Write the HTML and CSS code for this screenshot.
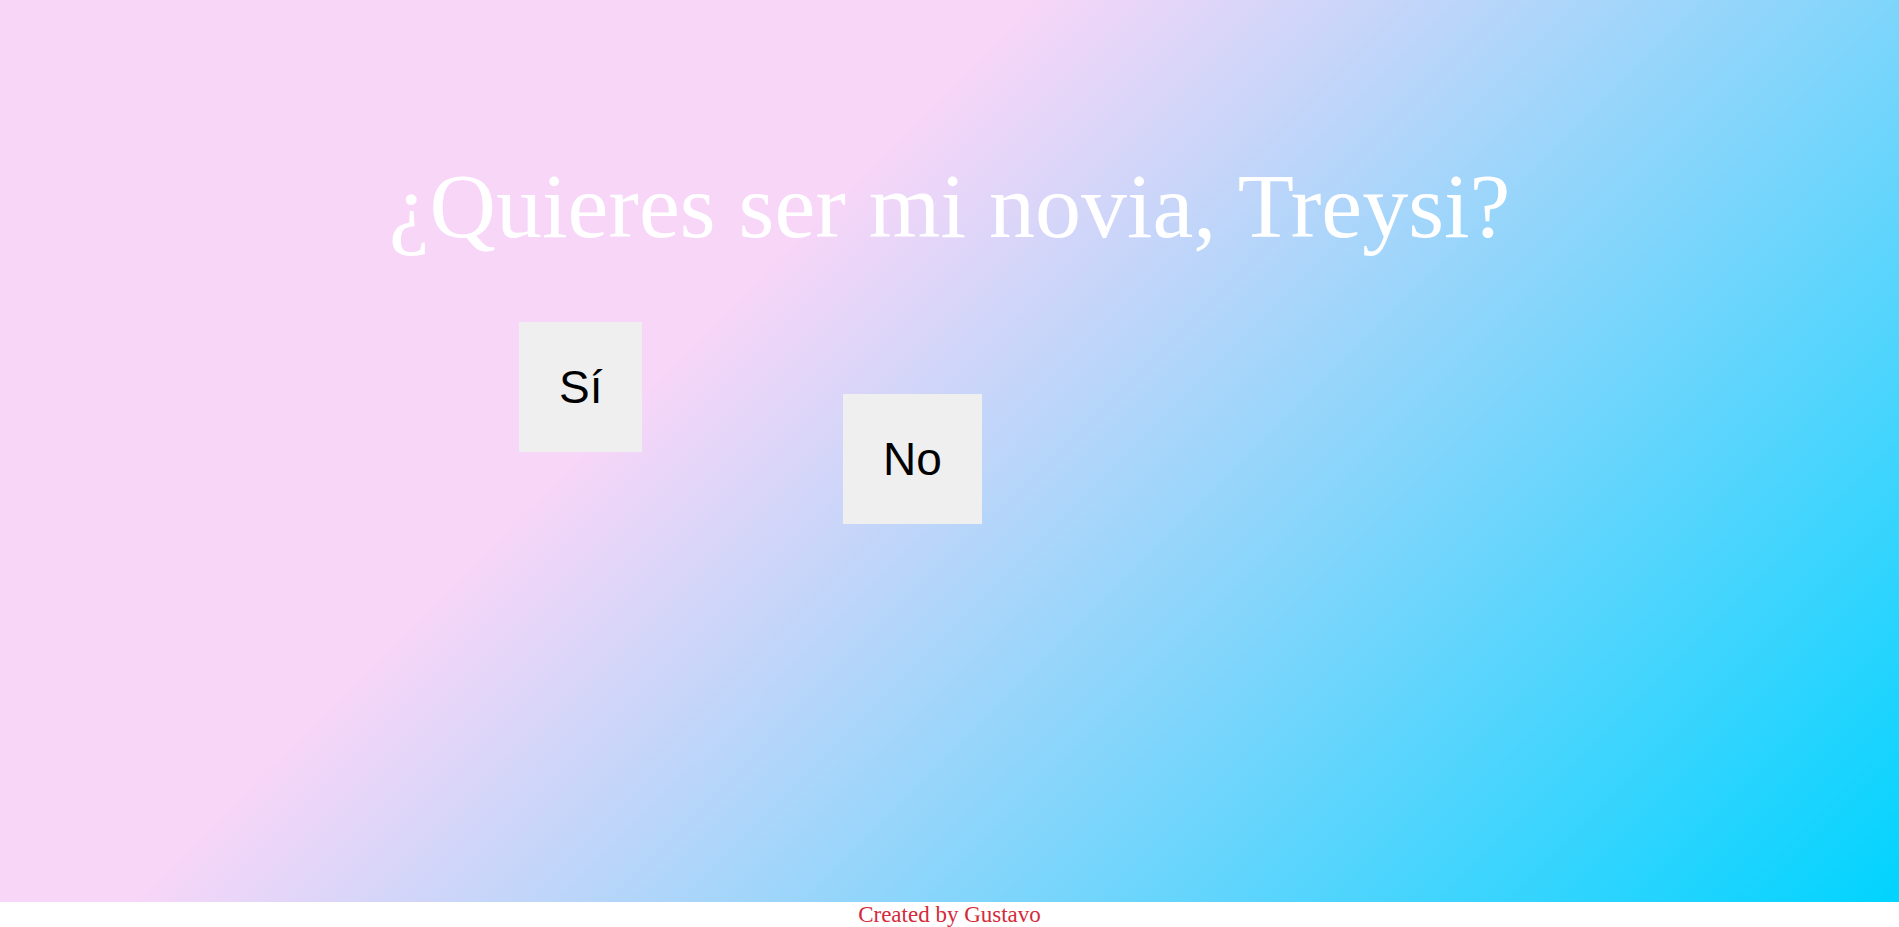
FILE: index.html
```html
<!DOCTYPE html>
<html lang="es">
<head>
<meta charset="utf-8">
<title>¿Quieres ser mi novia?</title>
<link rel="stylesheet" href="styles.css">
</head>
<body>
  <main class="stage">
    <h1 class="question">¿Quieres ser mi novia, Treysi?</h1>
    <div class="choices">
      <button class="choice choice-yes">Sí</button>
      <button class="choice choice-no">No</button>
    </div>
  </main>
  <footer class="credits">Created by Gustavo</footer>
</body>
</html>
```

FILE: styles.css
```css
html, body {
  margin: 0;
  padding: 0;
  height: 100%;
  overflow: hidden;
}

body {
  display: flex;
  flex-direction: column;
  background: #ffffff;
  font-family: "Liberation Serif", "Times New Roman", serif;
}

.stage {
  position: relative;
  flex: 1;
  display: flex;
  flex-direction: column;
  padding-top: 153px;
  box-sizing: border-box;
  background: linear-gradient(135deg, #f7d6f8 37%, #00d4ff 100%);
}

.question {
  margin: 0;
  text-align: center;
  color: #ffffff;
  font-family: "Liberation Serif", "Times New Roman", serif;
  font-weight: normal;
  font-size: 92px;
  line-height: normal;
}

.choices {
  display: flex;
  padding-top: 63px;
  padding-left: 519px;
}

.choice {
  border: none;
  border-radius: 0;
  background: #efefef;
  color: #000000;
  font-family: "Liberation Sans", Arial, sans-serif;
  font-size: 46px;
  line-height: 50px;
  padding: 40px;
  margin: 0;
  cursor: pointer;
}

.choice-no {
  position: absolute;
  left: 843px;
  top: 394px;
}

.credits {
  height: 25px;
  line-height: 25px;
  text-align: center;
  color: #d42a3a;
  font-family: "Liberation Serif", "Times New Roman", serif;
  font-size: 23px;
}
```
